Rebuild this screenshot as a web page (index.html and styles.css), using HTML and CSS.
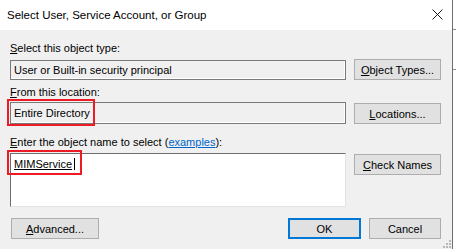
FILE: index.html
```html
<!DOCTYPE html>
<html lang="en">
<head>
    <meta charset="UTF-8">
    <title>Select User, Service Account, or Group</title>
    <link rel="stylesheet" href="styles.css">
</head>
<body>
    <div class="screen">
        <div class="window">
            <!-- Barra de título -->
            <div class="titlebar">
                <span class="title">Select User, Service Account, or Group</span>
                <span class="close">
                    <svg width="11" height="11" viewBox="0 0 11 11">
                        <path d="M0.5 0.5 L10.5 10.5 M10.5 0.5 L0.5 10.5" stroke="#1a1a1a" stroke-width="1" fill="none"/>
                    </svg>
                </span>
            </div>

            <div class="content">
                <div class="label label-first"><u>S</u>elect this object type:</div>
                <div class="row">
                    <div class="field">User or Built-in security principal</div>
                    <button class="btn"><u>O</u>bject Types...</button>
                </div>

                <div class="label label-second"><u>F</u>rom this location:</div>
                <div class="row">
                    <div class="field field-tall">
                        Entire Directory
                        <span class="mark mark-location"></span>
                    </div>
                    <button class="btn btn-low"><u>L</u>ocations...</button>
                </div>

                <div class="label label-third"><u>E</u>nter the object name to select (<a href="#" class="link">examples</a>):</div>
                <div class="row">
                    <div class="names">
                        <span class="name">MIMService</span><span class="caret"></span>
                        <span class="mark mark-name"></span>
                    </div>
                    <button class="btn btn-low"><u>C</u>heck Names</button>
                </div>

                <div class="footer">
                    <button class="btn btn-wide"><u>A</u>dvanced...</button>
                    <div class="actions">
                        <button class="btn btn-ok">OK</button>
                        <button class="btn btn-cancel">Cancel</button>
                    </div>
                </div>
                <span class="grip">
                    <svg width="8" height="8" viewBox="0 0 8 8">
                        <rect x="6" y="0" width="2" height="2" fill="#b8b8b8"/>
                        <rect x="3" y="3" width="2" height="2" fill="#b8b8b8"/>
                        <rect x="6" y="3" width="2" height="2" fill="#b8b8b8"/>
                        <rect x="0" y="6" width="2" height="2" fill="#b8b8b8"/>
                        <rect x="3" y="6" width="2" height="2" fill="#b8b8b8"/>
                        <rect x="6" y="6" width="2" height="2" fill="#b8b8b8"/>
                    </svg>
                </span>
            </div>
        </div>
        <div class="backdrop">
            <span class="tick tick-top"></span>
            <span class="tick tick-mid"></span>
        </div>
    </div>
</body>
</html>
```

FILE: styles.css
```css
body {
    margin: 0;
    background: #fff;
    font-family: "Liberation Sans", Arial, sans-serif;
    font-size: 11px;
    color: #000;
}
.screen {
    display: flex;
    width: 456px;
    height: 249px;
    overflow: hidden;
}
.window {
    width: 452px;
    border-right: 1px solid #6e6e6e;
    display: flex;
    flex-direction: column;
}
.titlebar {
    height: 30px;
    background: #fff;
    display: flex;
    align-items: center;
    justify-content: space-between;
    padding: 0 9px 0 7px;
}
.title {
    font-size: 11.5px;
}
.close {
    display: flex;
    margin-top: -2px;
}
.content {
    flex: 1;
    background: #f0f0f0;
    padding: 10px 0 0 10px;
    position: relative;
}
.label {
    height: 16px;
    line-height: 16px;
}
.label-first { margin-bottom: 3px; }
.label-second { margin-top: 4px; margin-bottom: 2px; }
.label-third { margin-top: 10px; margin-bottom: 3px; }
.link {
    color: #0066cc;
}
.row {
    display: flex;
    align-items: flex-start;
    gap: 8px;
}
.field {
    position: relative;
    box-sizing: border-box;
    width: 336px;
    height: 20px;
    margin-top: 1px;
    line-height: 18px;
    padding-left: 3px;
    background: #f0f0f0;
    border: 1px solid #7a7a7a;
    box-shadow: inset -1px -1px 0 #fff;
}
.field-tall {
    height: 22px;
    margin-top: 0;
    line-height: 20px;
}
.names {
    position: relative;
    box-sizing: border-box;
    width: 336px;
    height: 54px;
    padding: 3px 0 0 3px;
    background: #fff;
    border-top: 1px solid #6d6d6d;
    border-left: 1px solid #6d6d6d;
    border-right: 1px solid #e3e3e3;
    border-bottom: 1px solid #e3e3e3;
    line-height: 15px;
}
.name {
    text-decoration: underline;
}
.caret {
    display: inline-block;
    width: 1px;
    height: 12px;
    margin-left: 2px;
    vertical-align: -2px;
    background: #000;
}
.mark {
    position: absolute;
    border: 2px solid #ed1c24;
    pointer-events: none;
}
.mark-location {
    left: -4px;
    top: -4px;
    width: 84px;
    height: 23px;
}
.mark-name {
    left: -4px;
    top: -4px;
    width: 71px;
    height: 21px;
}
.btn {
    box-sizing: border-box;
    width: 87px;
    height: 21px;
    padding: 0;
    font: inherit;
    color: #000;
    background: #e1e1e1;
    border: 1px solid #adadad;
}
.btn-low {
    margin-top: 1px;
}
.footer {
    display: flex;
    justify-content: space-between;
    width: 431px;
    margin-top: 11px;
}
.btn-wide {
    width: 88px;
    margin-left: 1px;
}
.actions {
    display: flex;
    gap: 8px;
}
.btn-ok {
    width: 73px;
    border: 2px solid #0078d7;
}
.btn-cancel {
    width: 72px;
}
.grip {
    position: absolute;
    right: 1px;
    bottom: 1px;
    display: flex;
}
.backdrop {
    flex: 1;
    position: relative;
}
.tick {
    position: absolute;
    left: 0;
    width: 3px;
    height: 1px;
    background: #8a8a8a;
}
.tick-top { top: 29px; }
.tick-mid { top: 69px; }
```
